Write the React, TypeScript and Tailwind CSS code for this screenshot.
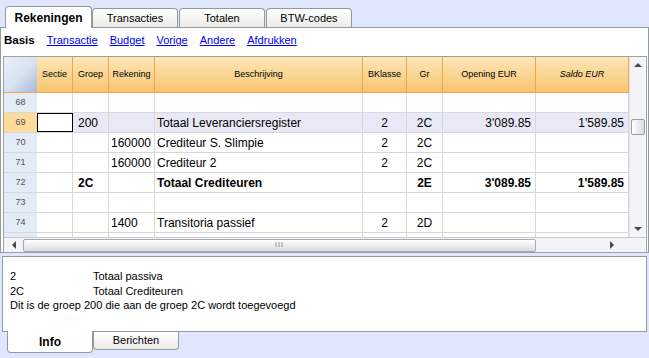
import React from "react";

type Row = {
  n?: number;
  groep?: string;
  rek?: string;
  desc?: string;
  bk?: string;
  gr?: string;
  open?: string;
  saldo?: string;
  bold?: boolean;
  current?: boolean;
};

const rows: Row[] = [
  { n: 68 },
  { n: 69, groep: "200", desc: "Totaal Leveranciersregister", bk: "2", gr: "2C", open: "3'089.85", saldo: "1'589.85", current: true },
  { n: 70, rek: "160000", desc: "Crediteur S. Slimpie", bk: "2", gr: "2C" },
  { n: 71, rek: "160000", desc: "Crediteur 2", bk: "2", gr: "2C" },
  { n: 72, groep: "2C", desc: "Totaal Crediteuren", gr: "2E", open: "3'089.85", saldo: "1'589.85", bold: true },
  { n: 73 },
  { n: 74, rek: "1400", desc: "Transitoria passief", bk: "2", gr: "2D" },
  {}, // partly visible row under the scroll edge
];

// header cells: label, width class, italic
const headers: [string, string, boolean][] = [
  ["Sectie", "w-[36px]", false],
  ["Groep", "w-[36px]", false],
  ["Rekening", "w-[46px]", false],
  ["Beschrijving", "w-[208px]", false],
  ["BKlasse", "w-[44px]", false],
  ["Gr", "w-[36px]", false],
  ["Opening EUR", "w-[93px]", false],
  ["Saldo EUR", "w-[93px]", true],
];

const TopTab = ({ label, active }: { label: string; active?: boolean }) =>
  active ? (
    <div className="w-[87px] h-[22px] -mb-px z-10 bg-white border border-b-0 border-[#919b9c] rounded-t-[4px] flex items-center justify-center text-[12px] font-bold text-black">
      {label}
    </div>
  ) : (
    <div className="w-[86px] h-[19px] bg-gradient-to-b from-white to-[#ecebe8] border border-b-0 border-[#919b9c] rounded-t-[4px] flex items-center justify-center text-[11px] text-black">
      {label}
    </div>
  );

const Cell = ({ w, children, align, bold }: { w: string; children?: React.ReactNode; align: string; bold?: boolean }) => (
  <div className={`${w} h-full shrink-0 border-r border-[#d8d8d8] flex items-center px-[3px] overflow-hidden whitespace-nowrap ${align} ${bold ? "font-bold" : ""}`}>
    {children}
  </div>
);

const GridRow = ({ r }: { r: Row }) => (
  <div className={`flex shrink-0 h-[20px] border-b border-[#d8d8d8] text-[12px] text-black ${r.current ? "bg-[#e8e8f6]" : "bg-white"}`}>
    <div className={`w-[33px] shrink-0 h-full flex items-center justify-center text-[9px] text-[#505050] ${r.current ? "bg-[#fddb9b]" : "bg-[#e3ebf6]"}`}>
      {r.n}
    </div>
    <div className={`w-[36px] h-full shrink-0 border-r ${r.current ? "border border-black bg-white" : "border-[#d8d8d8]"}`} />
    <Cell w="w-[36px]" align="justify-start pl-[5px]" bold={r.bold}>{r.groep}</Cell>
    <Cell w="w-[46px]" align="justify-start pl-[2px]">{r.rek}</Cell>
    <Cell w="w-[208px]" align="justify-start pl-[2px]" bold={r.bold}>{r.desc}</Cell>
    <Cell w="w-[44px]" align="justify-center">{r.bk}</Cell>
    <Cell w="w-[36px]" align="justify-center" bold={r.bold}>{r.gr}</Cell>
    <Cell w="w-[93px]" align="justify-end pr-[4px]" bold={r.bold}>{r.open}</Cell>
    <Cell w="w-[93px]" align="justify-end pr-[4px]" bold={r.bold}>{r.saldo}</Cell>
  </div>
);

const Arrow = ({ dir }: { dir: "up" | "down" | "left" | "right" }) => {
  const pts = {
    up: "0,4 4,0 8,4",
    down: "0,0 8,0 4,4",
    left: "4,0 4,8 0,4",
    right: "0,0 0,8 4,4",
  }[dir];
  const wide = dir === "up" || dir === "down";
  return (
    <svg width={wide ? 8 : 4} height={wide ? 4 : 8} viewBox={wide ? "0 0 8 4" : "0 0 4 8"}>
      <polygon points={pts} fill="#4a4a4a" />
    </svg>
  );
};

export default function App() {
  return (
    <div className="w-[649px] h-[358px] bg-[#dfe6fd] overflow-hidden flex flex-col font-['Liberation_Sans',Arial,sans-serif]">
      {/* top tabs */}
      <div className="h-[27px] flex items-end pl-[5px] shrink-0">
        <TopTab label="Rekeningen" active />
        <TopTab label="Transacties" />
        <div className="w-px" />
        <TopTab label="Totalen" />
        <div className="w-px" />
        <TopTab label="BTW-codes" />
      </div>

      {/* main panel */}
      <div className="h-[226px] shrink-0 bg-white border border-[#919b9c] flex flex-col">
        <div className="h-[28px] shrink-0 flex items-center gap-[12px] pl-[3px] text-[11px] pb-[3px]">
          <span className="font-bold text-[11.5px] text-black">Basis</span>
          <span className="text-[#0000ee] underline">Transactie</span>
          <span className="text-[#0000ee] underline">Budget</span>
          <span className="text-[#0000ee] underline">Vorige</span>
          <span className="text-[#0000ee] underline">Andere</span>
          <span className="text-[#0000ee] underline">Afdrukken</span>
        </div>

        <div className="ml-[2px] mr-[1px] h-[197px] shrink-0 border border-[#a0a0a0] flex flex-col">
          <div className="flex h-[180px] shrink-0">
            <div className="w-[625px] flex flex-col overflow-hidden">
              {/* header */}
              <div className="flex h-[36px] shrink-0 border-b border-[#f0a64b] bg-gradient-to-b from-[#fde7b8] to-[#f7c46f] text-[9px] text-black">
                <div className="w-[33px] shrink-0 h-full bg-gradient-to-br from-[#e8eef9] via-[#dbe4f3] to-[#a9b8d4]" />
                {headers.map(([label, w, it]) => (
                  <div
                    key={label}
                    className={`${w} shrink-0 h-full border-r border-[#f0a64b] flex items-center justify-center ${it ? "italic" : ""}`}
                  >
                    {label}
                  </div>
                ))}
              </div>
              {rows.map((r, i) => (
                <GridRow key={i} r={r} />
              ))}
            </div>
            {/* vertical scrollbar */}
            <div className="w-[16px] shrink-0 h-full bg-[#f4f3f7] border-l border-[#e4e4ea] flex flex-col items-center">
              <div className="h-[16px] shrink-0 flex items-center justify-center"><Arrow dir="up" /></div>
              <div className="h-[46px] shrink-0" />
              <div className="w-[14px] h-[16px] shrink-0 rounded-[2px] border border-[#9a9aa0] bg-gradient-to-r from-white to-[#dcdce2]" />
              <div className="flex-1" />
              <div className="h-[16px] shrink-0 flex items-center justify-center"><Arrow dir="down" /></div>
            </div>
          </div>
          {/* horizontal scrollbar */}
          <div className="flex h-[15px] shrink-0 border-t border-[#c8c8d0]">
            <div className="w-[625px] flex items-center bg-[#f4f3f7]">
              <div className="w-[19px] flex justify-center"><Arrow dir="left" /></div>
              <div className="w-[513px] h-[13px] rounded-[2px] border border-[#a8a8b0] bg-gradient-to-b from-white to-[#dcdce2] flex items-center justify-center">
                <span className="text-[7px] text-[#707070] tracking-[1px]">III</span>
              </div>
              <div className="flex-1 flex justify-end pr-[15px]"><Arrow dir="right" /></div>
            </div>
            <div className="w-[16px] bg-[#f4f3f7]" />
          </div>
        </div>
      </div>

      {/* info panel */}
      <div className="mt-[3px] mx-[2px] h-[76px] shrink-0 bg-white border border-[#919b9c] px-[7px] pt-[12px] text-[11px] text-black leading-[14.5px]">
        <div className="flex"><span className="w-[83px]">2</span><span>Totaal passiva</span></div>
        <div className="flex"><span className="w-[83px]">2C</span><span>Totaal Crediteuren</span></div>
        <div>Dit is de groep 200 die aan de groep 2C wordt toegevoegd</div>
      </div>

      {/* bottom tabs */}
      <div className="flex items-start pl-[7px]">
        <div className="w-[86px] h-[22px] -mt-px bg-white border border-t-0 border-[#919b9c] rounded-b-[4px] flex items-center justify-center text-[12px] font-bold text-black">
          Info
        </div>
        <div className="w-[86px] h-[18px] bg-gradient-to-b from-white to-[#ecebe8] border border-t-0 border-[#919b9c] rounded-b-[4px] flex items-center justify-center text-[11px] text-black">
          Berichten
        </div>
      </div>
    </div>
  );
}
